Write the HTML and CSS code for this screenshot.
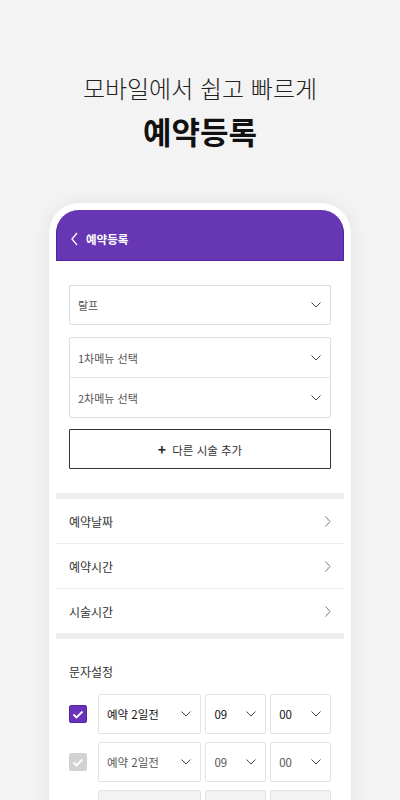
FILE: index.html
```html
<!DOCTYPE html>
<html lang="ko">
<head>
    <meta charset="UTF-8">
    <meta name="viewport" content="width=device-width, initial-scale=1.0">
    <title>예약등록</title>
    <link rel="stylesheet" href="styles.css">
</head>
<body>
    <div class="intro">
        <p class="intro-sub">모바일에서 쉽고 빠르게</p>
        <h1 class="intro-title">예약등록</h1>
    </div>

    <div class="phone">
        <div class="app-header">
            <svg class="back-icon" width="7" height="14" viewBox="0 0 7 14"><path d="M6 1 L1 7 L6 13" fill="none" stroke="#fff" stroke-width="1.3"/></svg>
            <span>예약등록</span>
        </div>

        <!-- menu selection -->
        <div class="section menu-section">
            <div class="select-box">
                <span>랄프</span>
                <svg class="down" width="10" height="6" viewBox="0 0 10 6"><path d="M0.5 0.5 L5 5 L9.5 0.5" fill="none" stroke="#444" stroke-width="1"/></svg>
            </div>

            <div class="select-group">
                <div class="select-row">
                    <span>1차메뉴 선택</span>
                    <svg class="down" width="10" height="6" viewBox="0 0 10 6"><path d="M0.5 0.5 L5 5 L9.5 0.5" fill="none" stroke="#444" stroke-width="1"/></svg>
                </div>
                <div class="select-row">
                    <span>2차메뉴 선택</span>
                    <svg class="down" width="10" height="6" viewBox="0 0 10 6"><path d="M0.5 0.5 L5 5 L9.5 0.5" fill="none" stroke="#444" stroke-width="1"/></svg>
                </div>
            </div>

            <button class="add-btn"><span class="plus">+</span> 다른 시술 추가</button>
        </div>

        <div class="band"></div>

        <!-- date / time rows -->
        <div class="link-list">
            <div class="link-row">
                <span>예약날짜</span>
                <svg width="6" height="11" viewBox="0 0 6 11"><path d="M0.5 0.5 L5 5.5 L0.5 10.5" fill="none" stroke="#777" stroke-width="1"/></svg>
            </div>
            <div class="link-row">
                <span>예약시간</span>
                <svg width="6" height="11" viewBox="0 0 6 11"><path d="M0.5 0.5 L5 5.5 L0.5 10.5" fill="none" stroke="#777" stroke-width="1"/></svg>
            </div>
            <div class="link-row">
                <span>시술시간</span>
                <svg width="6" height="11" viewBox="0 0 6 11"><path d="M0.5 0.5 L5 5.5 L0.5 10.5" fill="none" stroke="#777" stroke-width="1"/></svg>
            </div>
        </div>

        <div class="band"></div>

        <!-- sms settings -->
        <div class="section sms-section">
            <p class="sms-label">문자설정</p>

            <div class="sms-row">
                <span class="check on">
                    <svg width="12" height="9" viewBox="0 0 12 9"><path d="M1.5 4.5 L4.5 7.5 L10.5 1.5" fill="none" stroke="#fff" stroke-width="1.8"/></svg>
                </span>
                <div class="mini-select wide active"><span>예약 2일전</span><svg width="10" height="6" viewBox="0 0 10 6"><path d="M0.5 0.5 L5 5 L9.5 0.5" fill="none" stroke="#444" stroke-width="1"/></svg></div>
                <div class="mini-select active"><span>09</span><svg width="10" height="6" viewBox="0 0 10 6"><path d="M0.5 0.5 L5 5 L9.5 0.5" fill="none" stroke="#444" stroke-width="1"/></svg></div>
                <div class="mini-select active"><span>00</span><svg width="10" height="6" viewBox="0 0 10 6"><path d="M0.5 0.5 L5 5 L9.5 0.5" fill="none" stroke="#444" stroke-width="1"/></svg></div>
            </div>

            <div class="sms-row">
                <span class="check off">
                    <svg width="12" height="9" viewBox="0 0 12 9"><path d="M1.5 4.5 L4.5 7.5 L10.5 1.5" fill="none" stroke="#fff" stroke-width="1.8"/></svg>
                </span>
                <div class="mini-select wide"><span>예약 2일전</span><svg width="10" height="6" viewBox="0 0 10 6"><path d="M0.5 0.5 L5 5 L9.5 0.5" fill="none" stroke="#444" stroke-width="1"/></svg></div>
                <div class="mini-select"><span>09</span><svg width="10" height="6" viewBox="0 0 10 6"><path d="M0.5 0.5 L5 5 L9.5 0.5" fill="none" stroke="#444" stroke-width="1"/></svg></div>
                <div class="mini-select"><span>00</span><svg width="10" height="6" viewBox="0 0 10 6"><path d="M0.5 0.5 L5 5 L9.5 0.5" fill="none" stroke="#444" stroke-width="1"/></svg></div>
            </div>

            <div class="sms-row">
                <span class="check empty"></span>
                <div class="mini-select wide disabled"></div>
                <div class="mini-select disabled"></div>
                <div class="mini-select disabled"></div>
            </div>
        </div>
    </div>
</body>
</html>
```

FILE: styles.css
```css
body {
    margin: 0;
    background-color: #f3f3f3;
    font-family: "Noto Sans CJK KR", "Noto Sans", sans-serif;
    color: #222;
    overflow: hidden;
}

.intro {
    padding-top: 72px;
    text-align: center;
}

.intro-sub {
    margin: 0;
    font-size: 24px;
    font-weight: 300;
    line-height: 32px;
    color: #222;
}

.intro-title {
    margin: 7px 0 0;
    font-size: 31px;
    font-weight: 700;
    line-height: 40px;
    color: #111;
}

.phone {
    width: 288px;
    margin: 52px auto 0;
    padding: 7px 7px 0;
    background-color: #fff;
    border-radius: 30px 30px 0 0;
    box-shadow: 0 0 18px rgba(0, 0, 0, 0.07);
    min-height: 700px;
}

.app-header {
    height: 51px;
    box-sizing: border-box;
    display: flex;
    align-items: center;
    gap: 8px;
    padding: 7px 0 0 14px;
    background-color: #6736b2;
    border: 1px solid #5322a8;
    border-top: none;
    border-radius: 23px 23px 0 0;
    color: #fff;
    font-size: 11.5px;
    font-weight: 700;
}

.section {
    padding: 24px 13px;
}

.select-box,
.select-row {
    box-sizing: border-box;
    display: flex;
    align-items: center;
    justify-content: space-between;
    padding: 0 9px 0 8px;
    font-size: 11px;
    color: #555;
}

.select-box {
    height: 40px;
    border: 1px solid #dedede;
    border-radius: 2px;
}

.select-group {
    margin-top: 12px;
    border: 1px solid #dedede;
    border-radius: 2px;
}

.select-row {
    height: 39px;
}

.select-row + .select-row {
    height: 40px;
    border-top: 1px solid #e6e6e6;
}

.add-btn {
    display: block;
    width: 100%;
    height: 40px;
    margin-top: 11px;
    background-color: #fff;
    border: 1px solid #333;
    border-radius: 1px;
    font-family: inherit;
    font-size: 11.5px;
    color: #333;
}

.add-btn .plus {
    font-weight: 700;
    font-size: 14px;
    margin-right: 3px;
    color: #222;
}

.band {
    height: 6px;
    background-color: #eeeeee;
}

.link-row {
    height: 44px;
    display: flex;
    align-items: center;
    justify-content: space-between;
    padding: 0 13px;
    font-size: 12px;
    color: #333;
}

.link-row + .link-row {
    border-top: 1px solid #eeeeee;
}

.sms-section {
    padding-top: 26px;
}

.sms-label {
    margin: 0 0 15px;
    font-size: 12px;
    line-height: 14px;
    color: #333;
}

.sms-row {
    display: flex;
    align-items: center;
    margin-bottom: 8px;
}

.check {
    width: 18px;
    height: 18px;
    box-sizing: border-box;
    border-radius: 2px;
    margin-right: 11px;
    display: flex;
    align-items: center;
    justify-content: center;
}

.check.on {
    background-color: #6a32b8;
    border: 1px solid #5a24a8;
}

.check.off {
    background-color: #d2d2d2;
}

.check.empty {
    background-color: #fff;
    border: 1px solid #ddd;
}

.mini-select {
    width: 61px;
    height: 40px;
    box-sizing: border-box;
    display: flex;
    align-items: center;
    justify-content: space-between;
    padding: 0 9px 0 8px;
    border: 1px solid #e2e2e2;
    border-radius: 2px;
    font-size: 11.5px;
    color: #555;
}

.mini-select + .mini-select {
    margin-left: 4px;
}

.mini-select.wide {
    width: 104px;
}

.mini-select.active {
    color: #111;
}

.mini-select.disabled {
    background-color: #f3f3f3;
}
```
